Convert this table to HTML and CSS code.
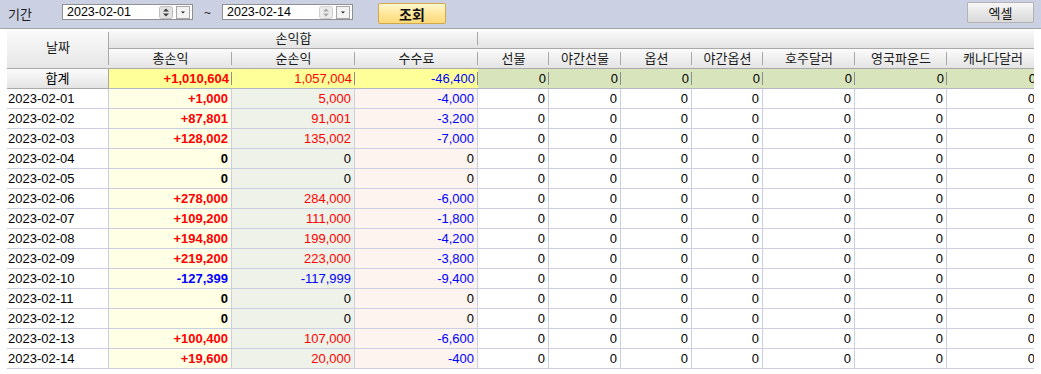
FILE: index.html
```html
<!DOCTYPE html>
<html lang="ko">
<head>
<meta charset="utf-8">
<title>기간별 손익</title>
<link rel="stylesheet" href="styles.css">
</head>
<body>
<div class="toolbar">
  <span class="label">기간</span>
  <div class="datebox">
    <span class="datetext">2023-02-01</span>
    <svg class="spin" width="14" height="13" viewBox="0 0 14 13"><rect x="0.5" y="0.5" width="13" height="12" rx="2" fill="#e2e2e2" stroke="#bdbdbd"/><path d="M4 5.5 L7 2.5 L10 5.5 Z" fill="#3c3c3c"/><path d="M4 7.5 L10 7.5 L7 10.5 Z" fill="#3c3c3c"/></svg>
    <svg class="drop" width="14" height="13" viewBox="0 0 14 13"><rect x="0.5" y="0.5" width="13" height="12" fill="#f3f3f3" stroke="#a6a6a6"/><path d="M5 5.5 L9 5.5 L7 7.5 Z" fill="#222"/></svg>
  </div>
  <span class="tilde">~</span>
  <div class="datebox">
    <span class="datetext">2023-02-14</span>
    <svg class="spin" width="14" height="13" viewBox="0 0 14 13"><rect x="0.5" y="0.5" width="13" height="12" rx="2" fill="#ececec" stroke="#cfcfcf"/><path d="M4 5.5 L7 2.5 L10 5.5 Z" fill="#a8a8a8"/><path d="M4 7.5 L10 7.5 L7 10.5 Z" fill="#a8a8a8"/></svg>
    <svg class="drop" width="14" height="13" viewBox="0 0 14 13"><rect x="0.5" y="0.5" width="13" height="12" fill="#f3f3f3" stroke="#a6a6a6"/><path d="M5 5.5 L9 5.5 L7 7.5 Z" fill="#222"/></svg>
  </div>
  <button class="btn-query">조회</button>
  <button class="btn-excel">엑셀</button>
</div>

<div class="gridwrap">
  <div class="grid">
    <div class="h hdate">날짜</div>
    <div class="h hgroup g1">손익합</div>
    <div class="h hgroup g2"></div>
    <div class="h">총손익</div>
    <div class="h">순손익</div>
    <div class="h">수수료</div>
    <div class="h">선물</div>
    <div class="h">야간선물</div>
    <div class="h">옵션</div>
    <div class="h">야간옵션</div>
    <div class="h">호주달러</div>
    <div class="h">영국파운드</div>
    <div class="h">캐나다달러</div>

    <div class="c sl">합계</div>
    <div class="c s1 b pos">+1,010,604</div>
    <div class="c s1 pos">1,057,004</div>
    <div class="c s1 neg">-46,400</div>
    <div class="c s2">0</div><div class="c s2">0</div><div class="c s2">0</div><div class="c s2">0</div><div class="c s2">0</div><div class="c s2">0</div><div class="c s2">0</div>

    <div class="c d">2023-02-01</div><div class="c t pos">+1,000</div><div class="c n pos">5,000</div><div class="c f neg">-4,000</div>
    <div class="c">0</div><div class="c">0</div><div class="c">0</div><div class="c">0</div><div class="c">0</div><div class="c">0</div><div class="c">0</div>

    <div class="c d">2023-02-02</div><div class="c t pos">+87,801</div><div class="c n pos">91,001</div><div class="c f neg">-3,200</div>
    <div class="c">0</div><div class="c">0</div><div class="c">0</div><div class="c">0</div><div class="c">0</div><div class="c">0</div><div class="c">0</div>

    <div class="c d">2023-02-03</div><div class="c t pos">+128,002</div><div class="c n pos">135,002</div><div class="c f neg">-7,000</div>
    <div class="c">0</div><div class="c">0</div><div class="c">0</div><div class="c">0</div><div class="c">0</div><div class="c">0</div><div class="c">0</div>

    <div class="c d">2023-02-04</div><div class="c t">0</div><div class="c n">0</div><div class="c f">0</div>
    <div class="c">0</div><div class="c">0</div><div class="c">0</div><div class="c">0</div><div class="c">0</div><div class="c">0</div><div class="c">0</div>

    <div class="c d">2023-02-05</div><div class="c t">0</div><div class="c n">0</div><div class="c f">0</div>
    <div class="c">0</div><div class="c">0</div><div class="c">0</div><div class="c">0</div><div class="c">0</div><div class="c">0</div><div class="c">0</div>

    <div class="c d">2023-02-06</div><div class="c t pos">+278,000</div><div class="c n pos">284,000</div><div class="c f neg">-6,000</div>
    <div class="c">0</div><div class="c">0</div><div class="c">0</div><div class="c">0</div><div class="c">0</div><div class="c">0</div><div class="c">0</div>

    <div class="c d">2023-02-07</div><div class="c t pos">+109,200</div><div class="c n pos">111,000</div><div class="c f neg">-1,800</div>
    <div class="c">0</div><div class="c">0</div><div class="c">0</div><div class="c">0</div><div class="c">0</div><div class="c">0</div><div class="c">0</div>

    <div class="c d">2023-02-08</div><div class="c t pos">+194,800</div><div class="c n pos">199,000</div><div class="c f neg">-4,200</div>
    <div class="c">0</div><div class="c">0</div><div class="c">0</div><div class="c">0</div><div class="c">0</div><div class="c">0</div><div class="c">0</div>

    <div class="c d">2023-02-09</div><div class="c t pos">+219,200</div><div class="c n pos">223,000</div><div class="c f neg">-3,800</div>
    <div class="c">0</div><div class="c">0</div><div class="c">0</div><div class="c">0</div><div class="c">0</div><div class="c">0</div><div class="c">0</div>

    <div class="c d">2023-02-10</div><div class="c t neg">-127,399</div><div class="c n neg">-117,999</div><div class="c f neg">-9,400</div>
    <div class="c">0</div><div class="c">0</div><div class="c">0</div><div class="c">0</div><div class="c">0</div><div class="c">0</div><div class="c">0</div>

    <div class="c d">2023-02-11</div><div class="c t">0</div><div class="c n">0</div><div class="c f">0</div>
    <div class="c">0</div><div class="c">0</div><div class="c">0</div><div class="c">0</div><div class="c">0</div><div class="c">0</div><div class="c">0</div>

    <div class="c d">2023-02-12</div><div class="c t">0</div><div class="c n">0</div><div class="c f">0</div>
    <div class="c">0</div><div class="c">0</div><div class="c">0</div><div class="c">0</div><div class="c">0</div><div class="c">0</div><div class="c">0</div>

    <div class="c d">2023-02-13</div><div class="c t pos">+100,400</div><div class="c n pos">107,000</div><div class="c f neg">-6,600</div>
    <div class="c">0</div><div class="c">0</div><div class="c">0</div><div class="c">0</div><div class="c">0</div><div class="c">0</div><div class="c">0</div>

    <div class="c d">2023-02-14</div><div class="c t pos">+19,600</div><div class="c n pos">20,000</div><div class="c f neg">-400</div>
    <div class="c">0</div><div class="c">0</div><div class="c">0</div><div class="c">0</div><div class="c">0</div><div class="c">0</div><div class="c">0</div>
  </div>
</div>
</body>
</html>
```
FILE: styles.css
```css
* { box-sizing: border-box; }
html, body { margin: 0; padding: 0; background: #fff; }
body {
  width: 1041px;
  height: 374px;
  overflow: hidden;
  font-family: "Liberation Sans", "Noto Sans CJK KR", sans-serif;
  font-size: 12px;
  color: #000;
}

/* ---------- toolbar ---------- */
.toolbar {
  display: flex;
  align-items: flex-start;
  height: 29px;
  background: #cbd0e2;
  border-bottom: 1px solid #a3a5ad;
  padding-left: 8px;
}
.label {
  width: 54px;
  margin-top: 5px;
  font-family: "Noto Sans CJK KR", sans-serif;
  font-size: 13px;
  line-height: 17px;
  color: #1e1e1e;
}
.datebox {
  display: flex;
  align-items: center;
  width: 131px;
  height: 16px;
  margin-top: 4px;
  background: #fff;
  border: 1px solid #8f9092;
  padding-left: 4px;
}
.datetext {
  flex: 1;
  font-size: 12.5px;
  line-height: 14px;
  color: #000;
}
.spin, .drop { display: block; flex: none; }
.drop { margin-left: 3px; margin-right: 2px; }
.tilde {
  width: 29px;
  text-align: center;
  margin-top: 6px;
  font-size: 12px;
  line-height: 14px;
  color: #222;
}
.btn-query {
  width: 68px;
  height: 21px;
  margin: 3px 0 0 25px;
  padding: 0;
  border: 1px solid #d2a94a;
  border-radius: 2px;
  background: linear-gradient(#fff7cf, #ffe596 55%, #fcd97a);
  font-family: "Noto Sans CJK KR", sans-serif;
  font-size: 14px;
  font-weight: bold;
  line-height: 18px;
  color: #111;
}
.btn-excel {
  width: 67px;
  height: 21px;
  margin: 2px 7px 0 auto;
  padding: 0;
  border: 1px solid #b3b3b3;
  border-radius: 1px;
  background: linear-gradient(#f7f7f7, #e4e4e4 60%, #dadada);
  font-family: "Noto Sans CJK KR", sans-serif;
  font-size: 13px;
  line-height: 18px;
  color: #111;
}

/* ---------- grid ---------- */
.gridwrap {
  width: 1027px;
  margin-left: 7px;
  overflow: hidden;
}
.grid {
  display: grid;
  width: 1032px;
  grid-template-columns: 102px 123px 123px 123px 71px 72px 71px 71px 92px 92px 92px;
  grid-auto-rows: 20px;
  font-size: 13px;
}

.h {
  text-align: center;
  line-height: 19px;
  color: #1a1a1a;
  white-space: nowrap;
  border-bottom: 1px solid #a9a9a9;
  background:
    linear-gradient(#a8a8a8, #a8a8a8) right 0 top 3px / 1px 13px no-repeat,
    linear-gradient(#fbfbfb, #e4e4e4);
}
.hdate {
  grid-row: span 2;
  line-height: 38px;
  background:
    linear-gradient(#a8a8a8, #a8a8a8) right 0 top 3px / 1px 33px no-repeat,
    linear-gradient(#fbfbfb, #e6e6e6);
}
.g1 { grid-column: span 3; }
.g2 { grid-column: span 7; }

.c {
  border-right: 1px solid #cacfe3;
  border-bottom: 1px solid #cacfe3;
  text-align: right;
  padding-right: 3px;
  line-height: 19px;
  white-space: nowrap;
  overflow: hidden;
}
.d { text-align: left; padding-left: 1px; padding-right: 0; }
.t { background: #ffffe6; font-weight: bold; }
.n { background: #eff2e9; }
.f { background: #fdf4f0; }

.sl {
  text-align: center;
  padding-right: 0;
  border-right: 1px solid #a8a8a8;
  border-bottom: 1px solid #a9a9a9;
  background: linear-gradient(#fbfbfb, #e4e4e4);
}
.s1, .s2 {
  border-right: none;
  border-bottom: 1px solid #b3b6c4;
}
.s1 {
  background:
    linear-gradient(#8e8e8e, #8e8e8e) right 0 top 3px / 1px 13px no-repeat,
    #ffff99;
}
.s2 {
  background:
    linear-gradient(#8e8e8e, #8e8e8e) right 0 top 3px / 1px 13px no-repeat,
    #d8e4bc;
}
.b { font-weight: bold; }
.pos { color: #ff0000; }
.neg { color: #0000ff; }
```
